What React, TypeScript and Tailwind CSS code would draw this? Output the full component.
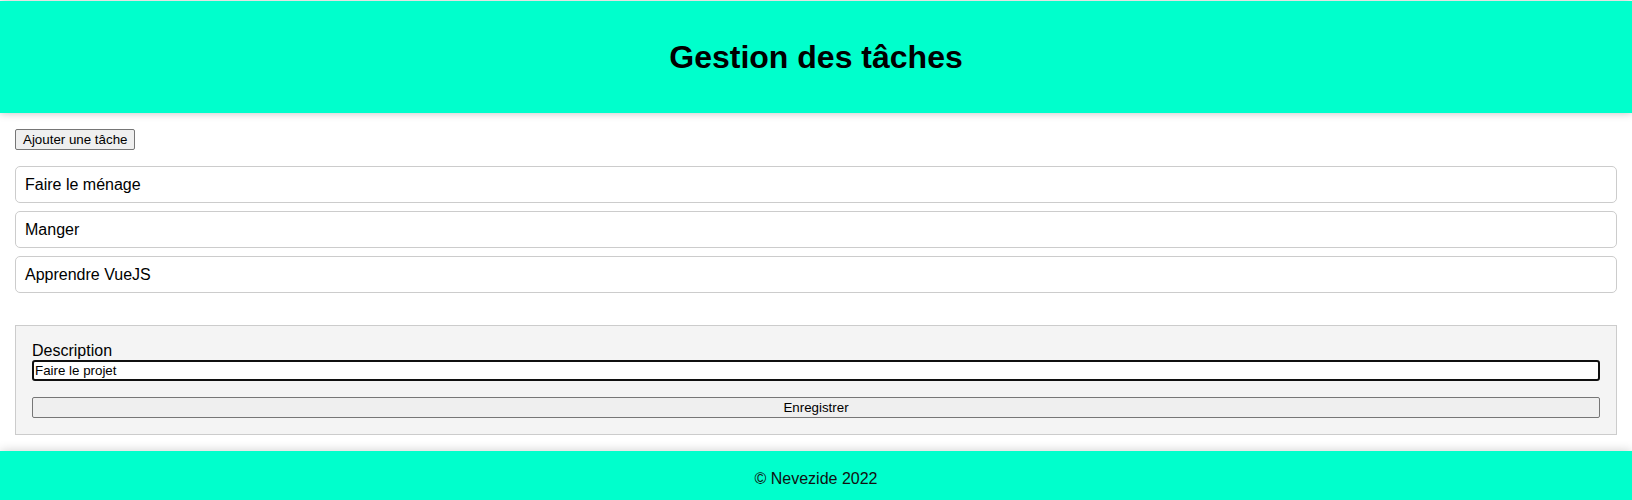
const TASKS = ["Faire le ménage", "Manger", "Apprendre VueJS"];

export default function App() {
  return (
    <div className="min-h-[500px] bg-white text-black font-['Liberation_Sans',Arial,sans-serif] pt-px">
      <header className="bg-[#00ffcc] h-[112px] flex items-center justify-center shadow-[0_0_8px_rgba(0,0,0,0.25)]">
        <h1 className="text-[32px] font-bold leading-[37px]">Gestion des tâches</h1>
      </header>

      <main className="px-[15px] pt-4 pb-4">
        <button className="block h-[21px] px-[7px] text-[13.33px] leading-[15px] bg-[#efefef] border border-[#767676] rounded-[2px]">
          Ajouter une tâche
        </button>

        <ul className="mt-4 flex flex-col gap-2">
          {TASKS.map((t) => (
            <li
              key={t}
              className="h-[37px] flex items-center px-[9px] border border-[#cccccc] rounded-[5px] text-base"
            >
              {t}
            </li>
          ))}
        </ul>

        <form className="mt-8 bg-[#f4f4f4] border border-[#cccccc] pt-[15px] pb-4 px-4">
          <label className="block text-base leading-[19px]">Description</label>
          <input
            defaultValue="Faire le projet"
            className="block w-full h-[21px] px-[1px] text-[13.33px] bg-white border-2 border-[#101010] rounded-[3px] outline-none"
          />
          <button
            type="button"
            className="mt-4 block w-full h-[21px] text-[13.33px] leading-[15px] bg-[#efefef] border border-[#767676] rounded-[2px]"
          >
            Enregistrer
          </button>
        </form>
      </main>

      <footer className="bg-[#00ffcc] py-4 text-center text-base text-[#111] shadow-[0_0_10px_rgba(0,0,0,0.2)]">
        © Nevezide 2022
      </footer>
    </div>
  );
}
